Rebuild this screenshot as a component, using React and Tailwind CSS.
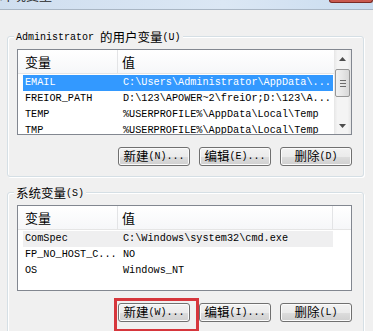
const mono = "font-['Liberation_Mono','Noto_Sans_CJK_SC',monospace]";
const cjk = "font-['Noto_Sans_CJK_SC','Liberation_Sans',sans-serif]";

function Btn({ zh, rest, highlight }) {
  return (
    <div className="relative">
      <button className="w-[72px] h-[19px] rounded-[3px] border border-[#707070] bg-[linear-gradient(#f2f2f2_0%,#ebebeb_50%,#dddddd_51%,#cfcfcf_100%)] shadow-[inset_0_0_0_1px_#fbfbfb] flex items-center justify-center text-black leading-none">
        <span className={`${cjk} text-[12.5px]`}>{zh}</span>
        <span className={`${mono} text-[10px]`}>{rest}</span>
      </button>
      {highlight && (
        <span className="absolute -left-[4px] -right-[9px] -top-[5px] -bottom-[10px] border-[3px] border-[#d6363c] pointer-events-none" />
      )}
    </div>
  );
}

function Header({ extra }) {
  return (
    <div className="flex h-[24px] border-b border-[#e5e5e5] bg-[linear-gradient(#ffffff,#f6f7f9)] text-black">
      <div className={`w-[100px] border-r border-[#e3e4e6] pl-[7px] flex items-center ${cjk} text-[13px]`}>变量</div>
      <div className={`${extra ? 'w-[215px] border-r border-[#e3e4e6]' : 'flex-1'} pl-[4px] flex items-center ${cjk} text-[13px]`}>值</div>
      {extra && <div className="flex-1" />}
    </div>
  );
}

function Row({ name, value, selected, hover }) {
  const bg = selected ? 'bg-[#3399ff] text-white' : hover ? 'bg-[#efeff0] text-black' : 'text-black';
  return (
    <div className={`ml-[5px] w-[310px] h-[16px] flex items-center ${bg} ${mono} text-[10.2px] leading-none whitespace-nowrap overflow-hidden`}>
      <span className="w-[98px] pl-[2px] shrink-0">{name}</span>
      <span className="pl-[2px]">{value}</span>
    </div>
  );
}

function Arrow({ up }) {
  return (
    <svg width="7" height="4" viewBox="0 0 7 4">
      <path d={up ? 'M0 4 L3.5 0 L7 4 Z' : 'M0 0 L3.5 4 L7 0 Z'} fill="#4d4d4d" />
    </svg>
  );
}

function ScrollBar() {
  return (
    <div className="w-[17px] flex flex-col bg-[linear-gradient(90deg,#e6e6e6,#f4f4f4_20%,#f4f4f4_80%,#e6e6e6)]">
      <div className="h-[17px] flex items-center justify-center"><Arrow up /></div>
      <div className="mt-[2px] mx-[1px] h-[28px] rounded-[2px] border border-[#979797] bg-[linear-gradient(90deg,#f2f2f2,#e6e6e6_50%,#d8d8d8)] flex flex-col items-center justify-center gap-[2px]">
        <span className="w-[6px] h-[1px] bg-[#6c6c6c]" />
        <span className="w-[6px] h-[1px] bg-[#6c6c6c]" />
        <span className="w-[6px] h-[1px] bg-[#6c6c6c]" />
      </div>
      <div className="flex-1" />
      <div className="h-[17px] flex items-center justify-center"><Arrow /></div>
    </div>
  );
}

function GroupBox({ label, className, children }) {
  return (
    <div className={`relative ml-[7px] w-[357px] border border-[#d5dfe5] rounded-[3px] shadow-[inset_1px_1px_0_#ffffff,1px_1px_0_#ffffff] ${className}`}>
      <div className="absolute left-[6px] -top-[8px] px-[2px] bg-[#f0f0f0] flex items-end leading-none h-[14px] text-black">
        {label}
      </div>
      {children}
    </div>
  );
}

export default function App() {
  return (
    <div className="w-[373px] h-[331px] overflow-hidden bg-[#f0f0f0] relative">
      {/* title bar, mostly cut off */}
      <div className="h-[10px] bg-[linear-gradient(90deg,#cfdeef,#dbe7f4_60%,#c9dcef)] border-b border-[#a9b6c4] overflow-hidden relative">
        <div className={`${cjk} text-[13px] leading-none text-[#1e1e1e] -mt-[12px]`}>环境变量</div>
        <div className="absolute right-0 top-0 w-[44px] h-[3px] bg-[#c9594f] border-b border-x border-[#7a2a24] rounded-b-[3px]" />
      </div>

      <GroupBox
        className="mt-[26px] pt-[12px] pb-[10px]"
        label={
          <>
            <span className={`${mono} text-[10px]`}>Administrator</span>
            <span className={`${cjk} text-[12.5px] ml-[6px]`}>的用户变量</span>
            <span className={`${mono} text-[10px]`}>(U)</span>
          </>
        }
      >
        <div className="ml-[9px] w-[335px] h-[86px] border border-[#828790] bg-white flex overflow-hidden">
          <div className="flex-1 overflow-hidden">
            <Header />
            <div className="pt-[1px]">
              <Row name="EMAIL" value="C:\Users\Administrator\AppData\..." selected />
              <Row name="FREIOR_PATH" value="D:\123\APOWER~2\freiOr;D:\123\A..." />
              <Row name="TEMP" value="%USERPROFILE%\AppData\Local\Temp" />
              <Row name="TMP" value="%USERPROFILE%\AppData\Local\Temp" />
            </div>
          </div>
          <ScrollBar />
        </div>
        <div className="mt-[12px] pr-[11px] flex justify-end gap-[9px]">
          <Btn zh="新建" rest="(N)..." />
          <Btn zh="编辑" rest="(E)..." />
          <Btn zh="删除" rest="(D)" />
        </div>
      </GroupBox>

      <GroupBox
        className="mt-[15px] pt-[12px] pb-[20px]"
        label={
          <>
            <span className={`${cjk} text-[12.5px]`}>系统变量</span>
            <span className={`${mono} text-[10px]`}>(S)</span>
          </>
        }
      >
        <div className="ml-[9px] w-[335px] h-[86px] border border-[#828790] bg-white overflow-hidden">
          <Header extra />
          <div className="pt-[1px]">
            <Row name="ComSpec" value="C:\Windows\system32\cmd.exe" hover />
            <Row name="FP_NO_HOST_C..." value="NO" />
            <Row name="OS" value="Windows_NT" />
          </div>
        </div>
        <div className="mt-[12px] pr-[11px] flex justify-end gap-[9px]">
          <Btn zh="新建" rest="(W)..." highlight />
          <Btn zh="编辑" rest="(I)..." />
          <Btn zh="删除" rest="(L)" />
        </div>
      </GroupBox>
    </div>
  );
}
